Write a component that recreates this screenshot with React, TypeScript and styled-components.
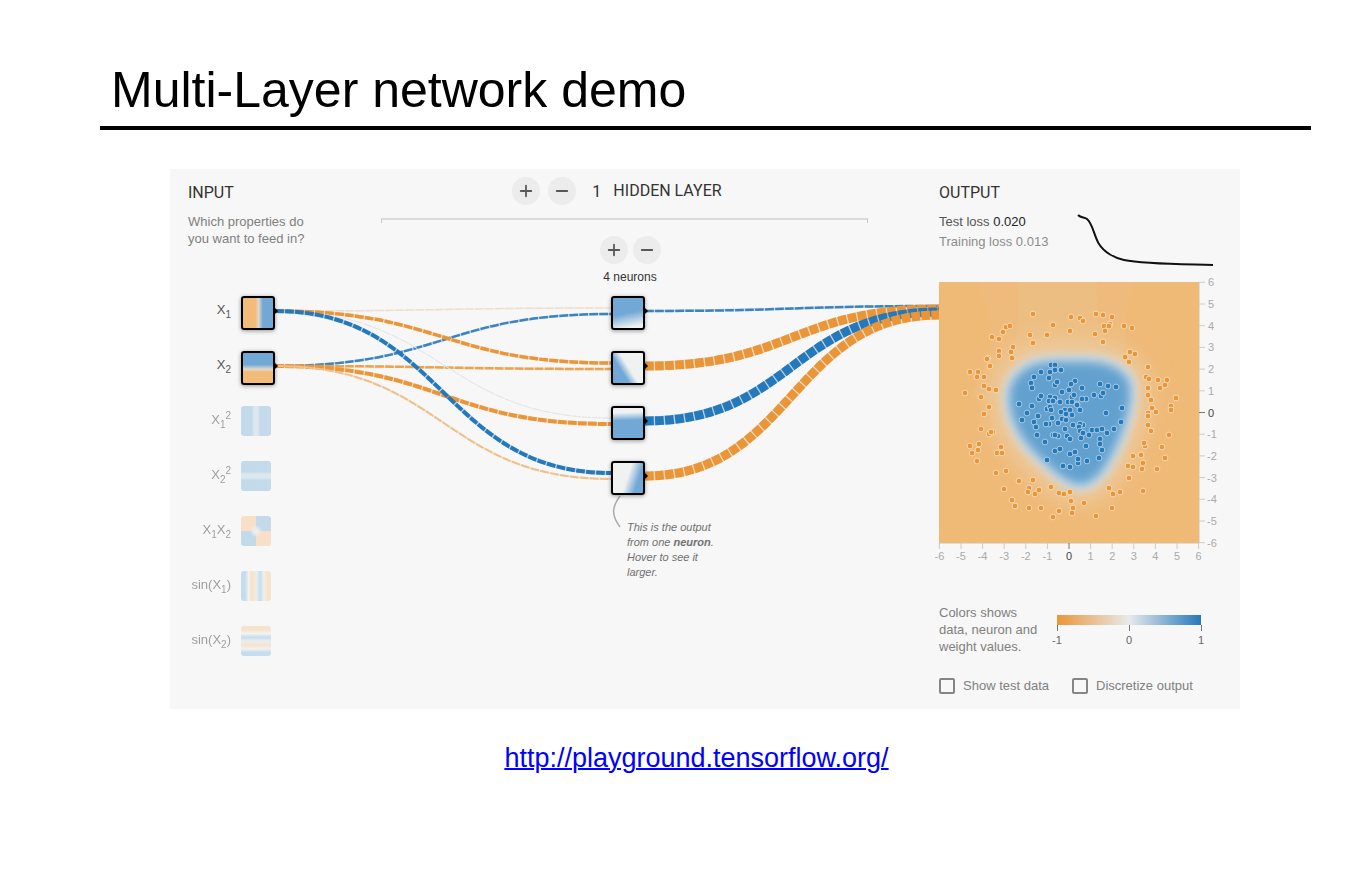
import React from "react";
import styled, { createGlobalStyle } from "styled-components";
import { Plus, Minus } from "lucide-react";

const ORANGE = "#ea9638";
const BLUE = "#2579bb";
const SANS = `"Liberation Sans", Arial, sans-serif`;

const GlobalStyle = createGlobalStyle`
  * { box-sizing: border-box; }
  body { margin: 0; background: #fff; font-family: ${SANS}; color: #000; }
  h1, h2, p { margin: 0; font-weight: 400; }
  ul { margin: 0; padding: 0; list-style: none; }
`;

const Slide = styled.main`
  padding: 61px 54px 40px 100px;
`;

const Title = styled.h1`
  padding: 0 11px 7px;
  border-bottom: 4px solid #000;
  font-size: 50px;
  line-height: 58px;
`;

const Panel = styled.section`
  display: flex;
  margin: 39px 71px 0 70px;
  padding: 0 18px 15px;
  background: #f7f7f7;
`;

const Network = styled.div`
  flex: 1;
  display: grid;
  grid-template-columns: 87px 336fr 34px 294fr;
  grid-template-rows: 67px 60px auto;
`;

const Heading = styled.h2`
  font-family: Roboto, sans-serif;
  font-size: 16px;
  line-height: 20px;
  color: #333;
`;

const Note = styled.p`
  font-size: 13px;
  line-height: 17px;
  color: #808080;
`;

const InputHead = styled.header`
  grid-area: 1 / 1 / 3 / 3;
  padding-top: 14px;
  ${Note} { margin-top: 10px; width: 130px; }
`;

const HiddenHead = styled.header`
  grid-area: 1 / 1 / 2 / -1;
  margin: 8px 71px 0 193px;
`;

const LayerControls = styled.div`
  display: flex;
  align-items: center;
  justify-content: center;
  gap: 8px;
  padding-right: 15px;
`;

const LayerCount = styled.span`
  margin: 0 4px 0 8px;
  font-family: Roboto, sans-serif;
  font-size: 16px;
  color: #333;
`;

const Bracket = styled.div`
  height: 5px;
  margin-top: 13px;
  border: 1px solid #c8c8c8;
  border-top: 2px solid #dadada;
  border-bottom: 0;
`;

const RoundButton = styled.button`
  display: grid;
  place-items: center;
  width: 28px;
  height: 28px;
  padding: 0;
  border: 0;
  border-radius: 50%;
  background: #ececec;
  color: #585858;
`;

const NeuronHead = styled.div`
  grid-area: 2 / 3;
  justify-self: center;
  padding-left: 4px;
  text-align: center;
`;

const NeuronControls = styled.div`
  display: flex;
  gap: 5px;
`;

const NeuronCount = styled.p`
  margin-top: 5px;
  font-size: 12px;
  line-height: 16px;
  color: #333;
  white-space: nowrap;
`;

const NodeList = styled.ul`
  display: grid;
  align-content: start;
  gap: 21px;
`;

const Feature = styled.li<{ $active?: boolean }>`
  display: grid;
  grid-template-columns: 43px 34px;
  gap: 10px;
  height: 34px;
  opacity: ${(p) => (p.$active ? 1 : 0.55)};
`;

const FeatureLabel = styled.span`
  justify-self: end;
  font-size: 13px;
  line-height: 28px;
  color: #555;
  white-space: nowrap;
  sub, sup { font-size: 10px; line-height: 0; }
`;

const Thumb = styled.div<{ $fill: string; $active?: boolean }>`
  position: relative;
  width: ${(p) => (p.$active ? 34 : 30)}px;
  height: ${(p) => (p.$active ? 34 : 30)}px;
  border: ${(p) => (p.$active ? "2px solid #000" : "0")};
  border-radius: 3px;
  background: ${(p) => p.$fill};
  background-origin: border-box;
  box-shadow: ${(p) => (p.$active ? "0 1px 4px rgba(0, 0, 0, 0.4)" : "none")};
  &::after {
    content: "";
    display: ${(p) => (p.$active ? "block" : "none")};
    position: absolute;
    z-index: 1;
    left: 31px;
    top: 9px;
    border: 4px solid transparent;
    border-left-color: #000;
    border-right: 0;
  }
`;

const Links = styled.svg<{ $column: number }>`
  grid-area: 3 / ${(p) => p.$column};
  display: block;
  width: 100%;
  height: 200px;
  overflow: visible;
`;

const FeatureColumn = styled.div`
  grid-area: 3 / 1;
`;

const NeuronColumn = styled.div`
  grid-area: 3 / 3;
`;

const Callout = styled.div`
  display: flex;
  width: 120px;
`;

const CalloutText = styled.p`
  flex: none;
  width: 92px;
  padding-top: 25px;
  font-size: 11px;
  line-height: 15px;
  font-style: italic;
  color: #707070;
`;

const Output = styled.aside`
  flex: none;
  width: 283px;
  padding-top: 14px;
`;

const Loss = styled.div`
  display: flex;
  justify-content: space-between;
  height: 70px;
  margin-top: 9px;
  padding-right: 8px;
`;

const LossLine = styled.p<{ $strong?: boolean }>`
  font-size: 13px;
  line-height: 20px;
  color: ${(p) => (p.$strong ? "#555" : "#8c8c8c")};
  span { color: ${(p) => (p.$strong ? "#222" : "inherit")}; }
`;

const Chart = styled.svg`
  display: block;
  overflow: visible;
  font-family: ${SANS};
  font-size: 11px;
`;

const Legend = styled.div`
  display: flex;
  justify-content: space-between;
  margin-top: 34px;
  padding-right: 21px;
  ${Note} { width: 104px; }
`;

const Scale = styled.div`
  width: 144px;
  padding-top: 11px;
`;

const ScaleBar = styled.div`
  height: 10px;
  background: linear-gradient(90deg, ${ORANGE}, #e8eaeb 50%, ${BLUE});
`;

const ScaleTicks = styled.div`
  display: flex;
  justify-content: space-between;
  margin: 0 -10px;
`;

const ScaleTick = styled.span`
  width: 20px;
  font-size: 11px;
  line-height: 18px;
  text-align: center;
  color: #666;
  &::before {
    content: "";
    display: block;
    width: 1px;
    height: 6px;
    margin: 0 auto;
    background: #777;
  }
`;

const Options = styled.div`
  display: flex;
  gap: 23px;
  margin-top: 22px;
`;

const Option = styled.label`
  display: flex;
  align-items: center;
  gap: 8px;
  font-size: 13px;
  line-height: 17px;
  color: #808080;
  white-space: nowrap;
`;

const Tick = styled.input`
  appearance: none;
  width: 16px;
  height: 16px;
  margin: 0;
  border: 2px solid #858585;
  border-radius: 2px;
  &:checked { background: #858585; }
`;

const Source = styled.p`
  margin-top: 34px;
  padding-right: 18px;
  font-size: 27px;
  line-height: 30px;
  text-align: center;
  a { color: #00f; text-decoration-thickness: 2px; }
`;

const B = "#72a8d6";
const O = "#f2bb7a";
const W = "#f0f2f2";

const features: { id: string; label: React.ReactNode; active?: boolean; fill: string }[] = [
  { id: "x1", label: <>X<sub>1</sub></>, active: true, fill: `linear-gradient(90deg, ${O} 42%, #e2d8cc 52%, ${B} 64%)` },
  { id: "x2", label: <>X<sub>2</sub></>, active: true, fill: `linear-gradient(180deg, ${B} 40%, #e2d8cc 53%, ${O} 62%)` },
  { id: "x1sq", label: <>X<sub>1</sub><sup>2</sup></>, fill: "linear-gradient(90deg, #98c4e0 36%, #c8dae8 44%, #c8dae8 56%, #98c4e0 64%)" },
  { id: "x2sq", label: <>X<sub>2</sub><sup>2</sup></>, fill: "linear-gradient(180deg, #98c4e0 36%, #c8dae8 44%, #c8dae8 56%, #98c4e0 64%)" },
  { id: "x1x2", label: <>X<sub>1</sub>X<sub>2</sub></>, fill: "radial-gradient(circle, #e6e8e8 8%, rgba(230, 232, 232, 0) 30%), conic-gradient(#98c4e0 25%, #f7cfa0 0 50%, #98c4e0 0 75%, #f7cfa0 0)" },
  { id: "sin1", label: <>sin(X<sub>1</sub>)</>, fill: "linear-gradient(90deg, #9cc8e4 14%, #eeeeec 25%, #f7d3a8 34%, #f7d8b4 44%, #dfe6ea 52%, #9cc8e4 64%, #e8ecec 76%, #f7d3a8 86%)" },
  { id: "sin2", label: <>sin(X<sub>2</sub>)</>, fill: "linear-gradient(180deg, #f7d3a8 14%, #eeeeec 25%, #9cc8e4 38%, #dfe6ea 50%, #f7d3a8 64%, #eeeeec 76%, #9cc8e4 88%)" },
];

const neurons = [
  `linear-gradient(168deg, ${B} 50%, ${W} 86%)`,
  `linear-gradient(58deg, ${B} 35%, ${W} 52%)`,
  `linear-gradient(178deg, ${W} 20%, ${B} 42%)`,
  `linear-gradient(108deg, ${W} 48%, ${B} 74%)`,
];

type Link = [from: number, to: number, width: number, color: string];

const inputLinks: Link[] = [
  [15, 12, 1.5, "#ecdfcd"],
  [70, 18, 2.5, "#3b84c0"],
  [15, 67, 3.5, ORANGE],
  [70, 73, 2.5, "#eca350"],
  [15, 122, 1, "#dfe6e8"],
  [70, 128, 4, ORANGE],
  [15, 177, 4, BLUE],
  [70, 183, 2, "#efc08a"],
];

const outputLinks: Link[] = [
  [15, 10, 2.5, "#3b84c0"],
  [70, 13, 9, ORANGE],
  [125, 16, 9, BLUE],
  [180, 19, 9, ORANGE],
];

const orangeDots = "94,32 114,43 132,35 131,49 141,36 91,53 108,53 94,61 67,45 71,44 64,50 53,55 60,57 74,65 60,69 60,74 72,70 73,76 49,76 48,77 51,84 31,90 39,90 38,95 45,95 45,104 50,107 57,108 26,111 42,115 50,125 45,132 144,39 157,32 164,33 173,35 171,42 165,44 170,44 166,49 156,52 164,60 185,44 193,46 191,70 196,72 186,75 190,80 209,85 207,95 210,97 219,98 228,98 226,103 221,106 209,106 209,113 237,116 212,118 232,124 232,128 213,126 217,130 209,131 209,134 209,143 42,147 50,152 54,150 52,150 31,164 40,162 39,168 33,171 38,179 62,165 58,171 63,171 57,191 67,189 80,199 65,207 94,198 90,206 89,210 96,212 100,208 73,218 76,224 90,226 102,226 112,205 120,211 125,212 131,210 132,219 134,226 133,231 120,229 114,235 212,149 230,153 206,164 205,161 223,165 226,176 202,173 194,174 204,181 189,184 194,185 203,187 218,187 190,196 204,209 170,206 174,212 181,210 173,226 145,221 157,234";

const blueDots = "112,83 116,83 102,90 111,90 116,88 122,88 95,95 110,96 92,101 93,106 116,103 118,100 136,99 132,102 130,108 123,110 100,117 102,114 111,115 116,116 110,119 114,119 121,120 133,115 129,120 133,120 138,122 80,122 93,124 108,127 111,125 112,128 126,128 131,128 88,131 99,134 113,136 83,138 95,140 122,130 123,137 127,138 127,132 133,133 110,142 107,142 119,141 134,143 161,102 169,104 177,105 143,106 155,113 162,114 164,111 147,117 143,117 135,113 138,123 141,128 167,131 183,126 182,140 144,143 141,142 97,145 98,153 106,160 114,153 119,154 116,153 126,147 128,154 131,157 116,169 121,167 131,172 136,170 108,178 124,184 131,185 139,181 139,177 140,145 141,149 142,156 144,151 150,153 153,148 158,148 163,147 175,147 168,151 161,157 161,162 163,168 160,176 147,164 148,179";

const toPoints = (s: string) => s.split(" ").map((p) => p.split(",").map(Number));

const BLOB = "M78 92 C92 76 114 78 140 78 C166 77 184 84 191 98 C196 112 191 134 182 156 C173 176 162 202 143 204 C128 205 112 188 95 172 C80 156 71 140 69 122 C68 108 70 100 78 92 Z";

const ticks = Array.from({ length: 13 }, (_, i) => i - 6);

function LinkSet({ width, links, column }: { width: number; links: Link[]; column: number }) {
  const mid = width / 2;
  return (
    <Links $column={column} viewBox={`0 0 ${width} 200`} preserveAspectRatio="none" aria-hidden>
      {links.map(([from, to, w, color]) => {
        const d = `M0 ${from} C${mid} ${from} ${mid} ${to} ${width} ${to}`;
        return (
          <g key={`${from}-${to}`} fill="none" stroke={color} strokeWidth={w}>
            <path d={d} strokeOpacity={0.3} />
            <path d={d} strokeDasharray="8.7 1.3" />
          </g>
        );
      })}
    </Links>
  );
}

function PlusMinus({ noun }: { noun: string }) {
  return (
    <>
      <RoundButton type="button" aria-label={`Add ${noun}`}><Plus size={18} strokeWidth={2.4} /></RoundButton>
      <RoundButton type="button" aria-label={`Remove ${noun}`}><Minus size={18} strokeWidth={2.4} /></RoundButton>
    </>
  );
}

function OutputChart() {
  return (
    <Chart width={283} height={288} viewBox="0 0 283 288" role="img" aria-label="Output heatmap">
      <defs>
        <clipPath id="plot"><rect width={260} height={261} /></clipPath>
        <filter id="wide" x="-50%" y="-50%" width="200%" height="200%"><feGaussianBlur stdDeviation={13} /></filter>
        <filter id="edge" x="-50%" y="-50%" width="200%" height="200%"><feGaussianBlur stdDeviation={4} /></filter>
        <filter id="core" x="-50%" y="-50%" width="200%" height="200%"><feGaussianBlur stdDeviation={6} /></filter>
      </defs>
      <g clipPath="url(#plot)">
        <rect width={260} height={261} fill="#efb976" />
        <path d="M38 0 C55 40 62 70 30 115 L100 130 L190 80 Q180 40 196 0 Z" fill="#eebb7c" />
        <path d="M78 0 Q84 40 70 80 L170 80 Q155 40 158 0 Z" fill="#edc085" opacity={0.6} />
        <path d={BLOB} fill="#ecd0ab" stroke="#ecd0ab" strokeWidth={30} filter="url(#wide)" />
        <path d={BLOB} fill="#f0f0f0" stroke="#f0f0f0" strokeWidth={8} filter="url(#edge)" />
        <path d={BLOB} fill="#62a0cf" filter="url(#core)" />
      </g>
      {toPoints(orangeDots).map(([x, y], i) => (
        <circle key={i} cx={x} cy={y} r={2.9} fill={ORANGE} stroke="#f6dab6" strokeWidth={1} />
      ))}
      {toPoints(blueDots).map(([x, y], i) => (
        <circle key={i} cx={x} cy={y} r={2.9} fill={BLUE} stroke="#a9cbe4" strokeWidth={1} />
      ))}
      <path d="M0 261.5 H260 M260.5 0 V261" stroke="#ddd" fill="none" />
      {ticks.map((t) => {
        const x = 130 + t * 21.6;
        const y = 130.5 - t * 21.7;
        const ink = t === 0 ? "#444" : "#aaa";
        return (
          <g key={t} fill={ink} stroke="none">
            <path d={`M${x} 261 v6 M260 ${y} h6`} stroke={t === 0 ? "#777" : "#ccc"} />
            <text x={x} y={278} textAnchor="middle">{t}</text>
            <text x={t < 0 ? 268 : 269} y={y + 4}>{t}</text>
          </g>
        );
      })}
    </Chart>
  );
}

export default function App() {
  return (
    <>
      <GlobalStyle />
      <Slide>
        <Title>Multi-Layer network demo</Title>
        <Panel>
          <Network>
            <InputHead>
              <Heading>INPUT</Heading>
              <Note>Which properties do you want to feed in?</Note>
            </InputHead>
            <HiddenHead>
              <LayerControls>
                <PlusMinus noun="layer" />
                <LayerCount>1</LayerCount>
                <Heading>HIDDEN LAYER</Heading>
              </LayerControls>
              <Bracket />
            </HiddenHead>
            <NeuronHead>
              <NeuronControls><PlusMinus noun="neuron" /></NeuronControls>
              <NeuronCount>4 neurons</NeuronCount>
            </NeuronHead>
            <FeatureColumn>
              <NodeList>
                {features.map((f) => (
                  <Feature key={f.id} $active={f.active}>
                    <FeatureLabel>{f.label}</FeatureLabel>
                    <Thumb $fill={f.fill} $active={f.active} />
                  </Feature>
                ))}
              </NodeList>
            </FeatureColumn>
            <LinkSet width={336} links={inputLinks} column={2} />
            <NeuronColumn>
              <NodeList>
                {neurons.map((fill, i) => (
                  <li key={i}><Thumb $fill={fill} $active /></li>
                ))}
              </NodeList>
              <Callout>
                <svg width={16} height={34} fill="none" stroke="#aaa" strokeWidth={1.5} aria-hidden>
                  <path d="M9 1 C1 12 0 20 9 32" />
                </svg>
                <CalloutText>This is the output from one <b>neuron</b>. Hover to see it larger.</CalloutText>
              </Callout>
            </NeuronColumn>
            <LinkSet width={294} links={outputLinks} column={4} />
          </Network>
          <Output>
            <Heading>OUTPUT</Heading>
            <Loss>
              <div>
                <LossLine $strong>Test loss <span>0.020</span></LossLine>
                <LossLine>Training loss 0.013</LossLine>
              </div>
              <svg width={137} height={56} fill="none" stroke="#111" strokeWidth={2} aria-hidden>
                <path d="M1 3 C4 6 7 5 10 7 C16 12 17 24 22 32 C27 40 37 46 47 48 C66 52 96 52 136 53" />
              </svg>
            </Loss>
            <OutputChart />
            <Legend>
              <Note>Colors shows data, neuron and weight values.</Note>
              <Scale>
                <ScaleBar />
                <ScaleTicks>
                  <ScaleTick>-1</ScaleTick>
                  <ScaleTick>0</ScaleTick>
                  <ScaleTick>1</ScaleTick>
                </ScaleTicks>
              </Scale>
            </Legend>
            <Options>
              <Option><Tick type="checkbox" />Show test data</Option>
              <Option><Tick type="checkbox" />Discretize output</Option>
            </Options>
          </Output>
        </Panel>
        <Source><a href="http://playground.tensorflow.org/">http://playground.tensorflow.org/</a></Source>
      </Slide>
    </>
  );
}
